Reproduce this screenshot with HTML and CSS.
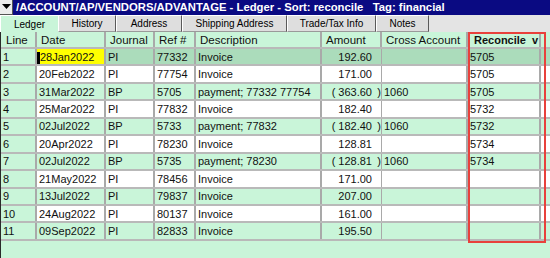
FILE: index.html
```html
<!DOCTYPE html>
<html>
<head>
<meta charset="utf-8">
<link rel="stylesheet" href="styles.css">
</head>
<body>
<div class="app">
  <div class="titlebar">
    <div class="drop"><svg width="9" height="6" viewBox="0 0 9 6"><polygon points="0,0 9,0 4.5,5" fill="#000"/></svg></div>
    <div class="title">/ACCOUNT/AP/VENDORS/ADVANTAGE - Ledger - Sort: reconcile   Tag: financial</div>
  </div>
  <div class="tabs">
    <div class="tab active w1">Ledger</div>
    <div class="tab w2">History</div>
    <div class="tab w3">Address</div>
    <div class="tab w4">Shipping Address</div>
    <div class="tab w5">Trade/Tax Info</div>
    <div class="tab w6">Notes</div>
  </div>
  <div class="grid">
    <div class="row head">
      <div class="c">Line</div><div class="c">Date</div><div class="c">Journal</div><div class="c">Ref #</div><div class="c">Description</div><div class="c">Amount</div><div class="c">Cross Account</div><div class="c rec"><span>Reconcile</span><span>v</span></div>
    </div>
    <div class="row sel">
      <div class="c ln">1</div><div class="c date cur">28Jan2022</div><div class="c">PI</div><div class="c">77332</div><div class="c">Invoice</div><div class="c amt">192.60<span class="p"></span></div><div class="c"></div><div class="c">5705</div>
    </div>
    <div class="row w">
      <div class="c ln">2</div><div class="c">20Feb2022</div><div class="c">PI</div><div class="c">77754</div><div class="c">Invoice</div><div class="c amt">171.00<span class="p"></span></div><div class="c"></div><div class="c">5705</div>
    </div>
    <div class="row g">
      <div class="c ln">3</div><div class="c">31Mar2022</div><div class="c">BP</div><div class="c">5705</div><div class="c">payment; 77332 77754</div><div class="c amt">( 363.60<span class="p">)</span></div><div class="c">1060</div><div class="c">5705</div>
    </div>
    <div class="row w">
      <div class="c ln">4</div><div class="c">25Mar2022</div><div class="c">PI</div><div class="c">77832</div><div class="c">Invoice</div><div class="c amt">182.40<span class="p"></span></div><div class="c"></div><div class="c">5732</div>
    </div>
    <div class="row g">
      <div class="c ln">5</div><div class="c">02Jul2022</div><div class="c">BP</div><div class="c">5733</div><div class="c">payment; 77832</div><div class="c amt">( 182.40<span class="p">)</span></div><div class="c">1060</div><div class="c">5732</div>
    </div>
    <div class="row w">
      <div class="c ln">6</div><div class="c">20Apr2022</div><div class="c">PI</div><div class="c">78230</div><div class="c">Invoice</div><div class="c amt">128.81<span class="p"></span></div><div class="c"></div><div class="c">5734</div>
    </div>
    <div class="row g">
      <div class="c ln">7</div><div class="c">02Jul2022</div><div class="c">BP</div><div class="c">5735</div><div class="c">payment; 78230</div><div class="c amt">( 128.81<span class="p">)</span></div><div class="c">1060</div><div class="c">5734</div>
    </div>
    <div class="row w">
      <div class="c ln">8</div><div class="c">21May2022</div><div class="c">PI</div><div class="c">78456</div><div class="c">Invoice</div><div class="c amt">171.00<span class="p"></span></div><div class="c"></div><div class="c"></div>
    </div>
    <div class="row g">
      <div class="c ln">9</div><div class="c">13Jul2022</div><div class="c">PI</div><div class="c">79837</div><div class="c">Invoice</div><div class="c amt">207.00<span class="p"></span></div><div class="c"></div><div class="c"></div>
    </div>
    <div class="row w">
      <div class="c ln">10</div><div class="c">24Aug2022</div><div class="c">PI</div><div class="c">80137</div><div class="c">Invoice</div><div class="c amt">161.00<span class="p"></span></div><div class="c"></div><div class="c"></div>
    </div>
    <div class="row g">
      <div class="c ln">11</div><div class="c">09Sep2022</div><div class="c">PI</div><div class="c">82833</div><div class="c">Invoice</div><div class="c amt">195.50<span class="p"></span></div><div class="c"></div><div class="c"></div>
    </div>
    <div class="filler"></div>
    <div class="redbox"></div>
  </div>
</div>
</body>
</html>
```

FILE: styles.css
```css
* { box-sizing: border-box; }
html, body { margin: 0; padding: 0; }
body {
  width: 550px;
  height: 258px;
  overflow: hidden;
  font-family: "Liberation Sans", Arial, sans-serif;
  background: #c9f5d9;
}
.app { width: 550px; height: 258px; display: flex; flex-direction: column; }

.titlebar {
  height: 15px;
  background: #0a0a82;
  display: flex;
  align-items: stretch;
}
.drop {
  width: 13px;
  background: #ececec;
  border-right: 1px solid #555;
  border-bottom: 1px solid #555;
  display: flex;
  align-items: center;
  justify-content: center;
}
.title {
  color: #fff;
  font-weight: bold;
  font-size: 11.3px;
  line-height: 15px;
  padding-left: 3px;
  white-space: pre;
}

.tabs {
  height: 17px;
  background: #e4e4e4;
  display: flex;
}
.tab {
  font-size: 10px;
  color: #000;
  display: flex;
  align-items: center;
  justify-content: center;
  background: #dedede;
  border-top: 1px solid #fff;
  border-left: 1px solid #fff;
  border-right: 1px solid #5a5a5a;
  border-bottom: 1px solid #9a9a9a;
}
.tab.active {
  background: #c9f5d9;
  border-bottom: none;
  border-right: none;
}
.w1 { width: 58px; }
.w2 { width: 58px; }
.w3 { width: 66px; }
.w4 { width: 105px; }
.w5 { width: 89px; }
.w6 { width: 53px; }

.grid {
  position: relative;
  flex: 1;
  display: flex;
  flex-direction: column;
  border-left: 1px solid #2a2a2a;
}
.row {
  display: grid;
  grid-template-columns: 36px 69px 49px 41px 126px 60px 86px 73px;
  height: 17.45px;
  border-bottom: 2px solid #b9b9b9;
  font-size: 11px;
  color: #111;
}
.row.head {
  height: 17px;
  font-size: 11.5px;
  background: #c9f5d9;
}
.row.g { background: #c9f5d9; }
.row.w { background: #ffffff; }
.row.sel { background: #abdcbb; }
.c {
  display: flex;
  align-items: center;
  padding-left: 2px;
  white-space: nowrap;
  overflow: hidden;
  border-right: 2px solid #a9a9a9;
}
.head .c { padding-left: 4px; }
.head .c:first-child { padding-left: 5px; }
.c.ln { background: #c9f5d9; padding-left: 2px; }
.c.amt { justify-content: flex-end; padding-left: 0; border-right-width: 1px; }
.c.amt .p { display: inline-block; width: 9px; text-align: right; }
.head .rec {
  font-weight: bold;
  font-size: 11px;
  justify-content: space-between;
  padding-left: 6px;
  padding-right: 1px;
}
.c.date { background: #ffff00; padding-left: 3px; }
.c.cur { position: relative; }
.c.cur::before {
  content: "";
  position: absolute;
  left: 0;
  top: 3px;
  width: 3px;
  height: 12px;
  background: #000;
}
.filler { flex: 1; background: #c9f5d9; }
.redbox {
  position: absolute;
  left: 467px;
  top: 0;
  width: 78px;
  height: 211px;
  border: 2px solid #e8413c;
}
```
